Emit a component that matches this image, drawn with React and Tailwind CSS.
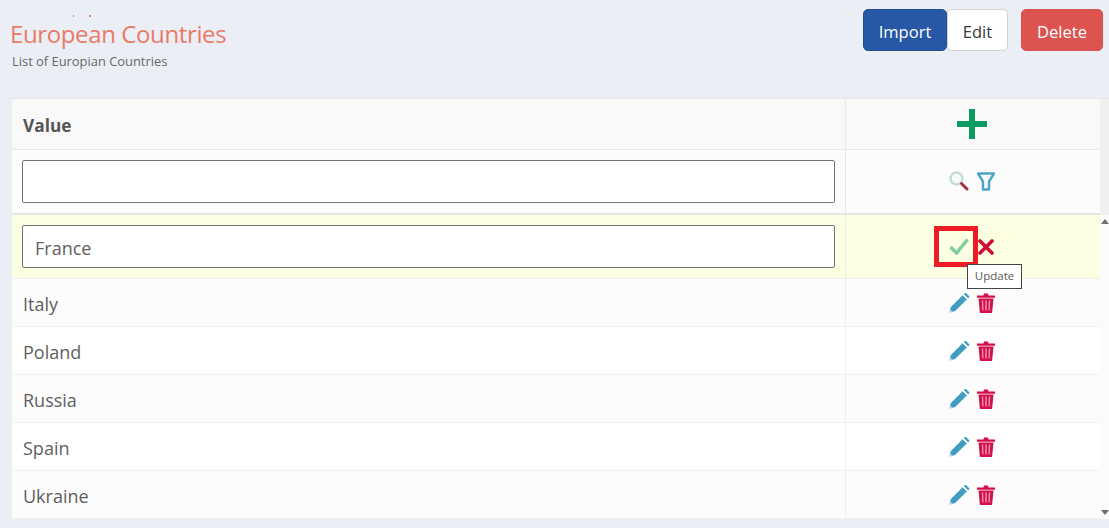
import React from "react";

const font = { fontFamily: '"Open Sans", "Noto Sans", sans-serif' };

const rows = ["Italy", "Poland", "Russia", "Spain", "Ukraine"];

const Plus = () => (
  <svg width="30" height="30" viewBox="0 0 30 30">
    <path d="M12 0h6v12h12v6H18v12h-6V18H0v-6h12z" fill="#0a9a62" />
  </svg>
);

const Magnifier = () => (
  <svg width="20" height="20" viewBox="0 0 20 20" fill="none">
    <circle cx="7.500" cy="7.500" r="6" stroke="#c3dcd9" strokeWidth="2.400" fill="#f6fbfa" />
    <path d="M12.500 12.500l5.500 5.500" stroke="#a5333f" strokeWidth="3" strokeLinecap="round" />
  </svg>
);

const Funnel = () => (
  <svg width="18" height="19" viewBox="0 0 18 19" fill="none">
    <path d="M1 1.500h16L12 9.500v8H6v-8z" stroke="#4ba5c9" strokeWidth="2.400" strokeLinejoin="round" />
  </svg>
);

const Check = () => (
  <svg width="20" height="17" viewBox="0 0 20 17" fill="none">
    <path d="M1.500 9l6 6L18.500 1.500" stroke="#7ecb9f" strokeWidth="3.400" />
  </svg>
);

const Cross = () => (
  <svg width="16" height="16" viewBox="0 0 16 16" fill="none">
    <path d="M2 2l12 12M14 2L2 14" stroke="#cf0b38" strokeWidth="3.600" strokeLinecap="round" />
  </svg>
);

const Pencil = () => (
  <svg width="21" height="20" viewBox="0 0 21 20">
    <path d="M0.500 19.500l1.400-5.600L13.600 2.200l4.200 4.200L6.100 18.100z" fill="#3f9cc2" />
    <path d="M14.800 1l1-0.700c.5-.3 1-.3 1.400 0l2.800 2.800c.3.400.3 1 0 1.400l-.8 1z" fill="#3f9cc2" />
    <path d="M0.500 19.500l.8-3.200 2.400 2.400z" fill="#a5d3e5" />
  </svg>
);

const Trash = () => (
  <svg width="18" height="20" viewBox="0 0 18 20">
    <path d="M0 2.500h6.500L7 .5h4l.5 2H18v2.200H0z" fill="#d0114a" />
    <path d="M1.500 5.500h15L15.200 19a1 1 0 0 1-1 1H3.800a1 1 0 0 1-1-1z" fill="#d0114a" />
    <path d="M5.500 7.500l.4 10M9 7.500v10M12.500 7.500l-.4 10" stroke="#f09ab2" strokeWidth="1.300" />
  </svg>
);

export default function App() {
  return (
    <div className="h-[528px] w-[1109px] overflow-hidden bg-[#ebeef4] text-[#5b5b5b]" style={font}>
      <div className="flex h-[98px] items-start justify-between pl-[10px] pr-[6px]">
        <div className="pt-[15px]">
          <div className="flex h-[2px] gap-[15px] pl-[63px]">
            <span className="h-[2px] w-[1px] bg-[#ea7a68]" />
            <span className="h-[2px] w-[2px] bg-[#ea7a68]" />
          </div>
          <h1 className="mt-[1px] text-[24px] leading-[32px] font-normal tracking-[-0.38px] text-[#ea7a68]">
            European Countries
          </h1>
          <p className="mt-[2px] ml-[2px] text-[12.9px] leading-[18px] text-[#666a70]">List of Europian Countries</p>
        </div>
        <div className="flex pt-[9px]">
          <button className="h-[42px] w-[84px] rounded-[5px] border border-[#20508f] bg-[#2658a5] pt-[4px] text-[16.5px] text-white">
            Import
          </button>
          <button className="h-[42px] w-[61px] rounded-[5px] border border-[#cfd1d4] bg-white pt-[4px] text-[16.5px] text-[#343a40]">
            Edit
          </button>
          <button className="ml-[13px] h-[42px] w-[82px] rounded-[5px] border border-[#d9534f] bg-[#dc5350] pt-[4px] text-[16.5px] text-white">
            Delete
          </button>
        </div>
      </div>

      <div className="ml-[12px] h-[421px] w-[1097px] border-t border-b border-[#e6e6e6]">
        <div className="flex h-[51px] bg-[#f0f0f0]">
          <div className="flex w-[834px] items-center border-r border-b border-[#e8e8e8] bg-[#f9f9f9] pt-[3px] pl-[11px] text-[17.3px] font-bold text-[#555555]">
            Value
          </div>
          <div className="flex w-[254px] items-center justify-center border-b border-[#e8e8e8] bg-[#f9f9f9] pr-[2px]">
            <Plus />
          </div>
        </div>
        <div className="flex h-[65px] bg-[#f0f0f0]">
          <div className="flex w-[834px] items-center border-r border-b-2 border-[#e6e6e6] bg-[#fcfcfc] px-[10px]">
            <div className="h-[43px] w-full rounded-[2px] border border-[#767676] bg-white" />
          </div>
          <div className="flex w-[254px] items-center justify-center gap-[8px] border-b-2 border-[#e6e6e6] bg-[#fcfcfc] pr-[2px] pb-[1px]">
            <Magnifier />
            <Funnel />
          </div>
        </div>

        <div className="relative h-[304px] bg-[#fbfbfb]">
          <div className="flex h-[64px]">
            <div className="flex w-[834px] items-center border-r border-b border-[#ececec] bg-[#fdffe3] px-[10px]">
              <div className="flex h-[43px] w-full items-center rounded-[2px] border border-[#767676] bg-white pt-[3px] pl-[12px] text-[18px] text-[#5f5f5f]">
                France
              </div>
            </div>
            <div className="relative flex w-[254px] items-center justify-center gap-[9px] border-b border-[#ececec] bg-[#fdffe3] pr-[3px]">
              <Check />
              <Cross />
              <span className="absolute top-[11px] left-[88px] h-[41px] w-[44px] border-[5px] border-[#ed1c24]" />
              <span className="absolute top-[49px] left-[121px] z-10 flex h-[25px] w-[55px] items-center justify-center border border-[#444444] bg-white pb-[1px] text-[11.5px] text-[#5b5b5b]">
                Update
              </span>
            </div>
          </div>
          {rows.map((name, i) => (
            <div key={name} className="flex h-[48px]">
              <div
                className={
                  i % 2 === 0
                    ? "flex w-[834px] items-center border-r border-b border-[#f0f0f0] bg-[#fcfcfc] pt-[3px] pl-[11px] text-[18px] text-[#5f5f5f]"
                    : "flex w-[834px] items-center border-r border-b border-[#f0f0f0] bg-white pt-[3px] pl-[11px] text-[18px] text-[#5f5f5f]"
                }
              >
                {name}
              </div>
              <div
                className={
                  i % 2 === 0
                    ? "flex w-[254px] items-center justify-center gap-[7px] border-b border-[#f0f0f0] bg-[#fcfcfc] pt-[1px] pr-[3px]"
                    : "flex w-[254px] items-center justify-center gap-[7px] border-b border-[#f0f0f0] bg-white pt-[1px] pr-[3px]"
                }
              >
                <Pencil />
                <Trash />
              </div>
            </div>
          ))}
          {/* scrollbar arrows */}
          <span className="absolute top-[4px] right-[0px] h-0 w-0 border-x-[4px] border-b-[5px] border-x-transparent border-b-[#6f6f6f]" />
          <span className="absolute right-[0px] bottom-[4px] h-0 w-0 border-x-[4px] border-t-[5px] border-x-transparent border-t-[#6f6f6f]" />
        </div>
      </div>
    </div>
  );
}
